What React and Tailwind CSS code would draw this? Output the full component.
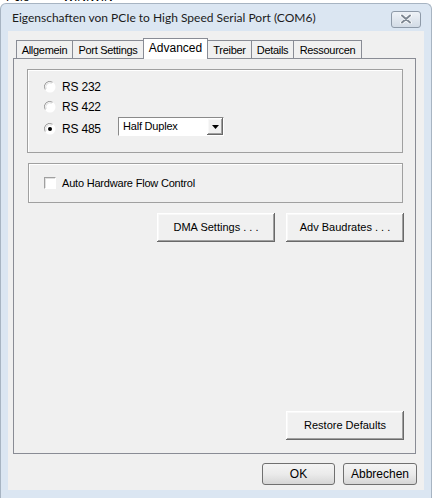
import React from "react";

const btn3d =
  "shadow-[inset_-1px_-1px_0_#696969,inset_1px_1px_0_#ffffff,inset_-2px_-2px_0_#a0a0a0,inset_2px_2px_0_#f8f8f8]";

function Radio({ checked }) {
  return (
    <div className="w-[12px] h-[12px] shrink-0">
      <svg width="12" height="12" viewBox="0 0 12 12">
        <circle cx="6" cy="6" r="5.5" fill="#ffffff" />
        <path d="M1.2 8.5 A5.3 5.3 0 0 1 8.5 1.2" stroke="#9a9a9a" strokeWidth="1" fill="none" />
        <path d="M2.2 7.8 A4.2 4.2 0 0 1 7.8 2.2" stroke="#dedede" strokeWidth="1" fill="none" />
        {checked && <circle cx="6" cy="6" r="2" fill="#000000" />}
      </svg>
    </div>
  );
}

function Tab({ label, w, selected }) {
  if (selected) {
    return (
      <div
        className={`${w} h-[21px] -ml-[1px] -mb-[1px] relative z-10 bg-white border-t border-l border-r border-[#898c95] flex items-start justify-center pt-[3px] text-[12px] leading-[13px] text-black`}
      >
        {label}
      </div>
    );
  }
  return (
    <div
      className={`${w} h-[18px] -ml-[1px] first:ml-0 bg-[#f0f0f0] border-t border-l border-r border-[#898c95] flex items-center justify-center pt-[1px] text-[11px] leading-[12px] tracking-[-0.3px] text-black`}
    >
      {label}
    </div>
  );
}

export default function App() {
  return (
    <div
      className="w-[432px] h-[498px] bg-white overflow-hidden flex flex-col"
      style={{ fontFamily: '"Liberation Sans", Arial, sans-serif' }}
    >
      <div className="h-[3px] overflow-hidden">
        <div className="-mt-[9px] pl-[6px] text-[12px] leading-[12px] text-black whitespace-nowrap">
          Pcie&nbsp;&nbsp;&nbsp;&nbsp;&nbsp;&nbsp;&nbsp;&nbsp;&nbsp;&nbsp;WINIWIN
        </div>
      </div>
      <div className="flex-1 flex flex-col rounded-t-[6px] border border-b-0 border-[#a7b4c2] bg-[#dbe6f2]">
        {/* title bar */}
        <div className="h-[27px] flex items-center justify-between pl-[11px] pr-[10px]">
          <span
            className="text-[12px] text-[#1c1c1c] whitespace-nowrap"
            style={{ fontFamily: 'Lato, "Liberation Sans", sans-serif' }}
          >
            Eigenschaften von PCIe to High Speed Serial Port (COM6)
          </span>
          <div className="w-[30px] h-[17px] mt-[3px] rounded-[3px] border border-[#8e9aa8] bg-gradient-to-b from-[#eef2f7] to-[#d3dce6] flex items-center justify-center">
            <svg width="12" height="10" viewBox="0 0 12 10">
              <path d="M2 1.5 L10 8.5 M10 1.5 L2 8.5" stroke="#ffffff" strokeWidth="3.6" strokeLinecap="round" />
              <path d="M2 1.5 L10 8.5 M10 1.5 L2 8.5" stroke="#7e8893" strokeWidth="2" strokeLinecap="round" />
            </svg>
          </div>
        </div>
        {/* client area */}
        <div className="flex-1 mx-[7px] mb-[8px] bg-[#f0f0f0] flex flex-col pt-[7px]">
          <div className="ml-[5px] w-[403px] flex flex-col">
            {/* tabs */}
            <div className="h-[20px] flex items-end pl-[3px]">
              <Tab label="Allgemein" w="w-[57px]" />
              <Tab label="Port Settings" w="w-[72px]" />
              <Tab label="Advanced" w="w-[65px]" selected />
              <Tab label="Treiber" w="w-[45px]" />
              <Tab label="Details" w="w-[43px]" />
              <Tab label="Ressourcen" w="w-[69px]" />
            </div>
            {/* page */}
            <div className="h-[396px] border border-[#898c95] bg-[#f0f0f0] flex flex-col text-[11px] text-black">
              {/* group 1 */}
              <div className="mt-[10px] ml-[13px] w-[376px] h-[84px] border border-[#a0a0a0] shadow-[inset_1px_1px_0_#ffffff] flex flex-col pl-[16px] pt-[7px]">
                <div className="h-[20px] flex items-center">
                  <Radio />
                  <span className="ml-[6px] text-[12px] tracking-[-0.2px]">RS 232</span>
                </div>
                <div className="h-[20px] flex items-center">
                  <Radio />
                  <span className="ml-[6px] text-[12px] tracking-[-0.2px]">RS 422</span>
                </div>
                <div className="h-[22px] mt-[1px] flex items-center">
                  <Radio checked />
                  <span className="ml-[6px] w-[56px] text-[12px] tracking-[-0.2px]">RS 485</span>
                  <div className="self-start -mt-[1px] w-[106px] h-[19px] flex border-t border-l border-[#8a8a8a] border-b border-r border-b-[#ffffff] border-r-[#ffffff] shadow-[inset_1px_1px_0_#404040]">
                    <div className="flex-1 bg-white flex items-center pl-[4px] tracking-[-0.2px]">Half Duplex</div>
                    <div className={`w-[16px] bg-[#f0f0f0] flex items-center justify-center ${btn3d}`}>
                      <svg width="7" height="4" viewBox="0 0 7 4">
                        <path d="M0 0 H7 L3.5 4 Z" fill="#000000" />
                      </svg>
                    </div>
                  </div>
                </div>
              </div>
              {/* group 2 */}
              <div className="mt-[10px] ml-[14px] w-[375px] h-[40px] border border-[#a0a0a0] shadow-[inset_1px_1px_0_#ffffff] flex items-center pl-[15px]">
                <div className="w-[12px] h-[12px] bg-white border-t border-l border-[#a0a0a0] border-b border-r border-b-[#ffffff] border-r-[#ffffff] shadow-[inset_1px_1px_0_#e0e0e0]" />
                <span className="ml-[6px] tracking-[-0.2px]">Auto Hardware Flow Control</span>
              </div>
              {/* buttons row */}
              <div className="mt-[10px] flex pl-[143px] gap-[11px]">
                <div className={`w-[118px] h-[29px] bg-[#f0f0f0] flex items-center justify-center ${btn3d}`}>
                  DMA Settings . . .
                </div>
                <div className={`w-[118px] h-[29px] bg-[#f0f0f0] flex items-center justify-center ${btn3d}`}>
                  Adv Baudrates . . .
                </div>
              </div>
              <div className="flex-1" />
              <div className="flex pl-[272px] mb-[13px]">
                <div className={`w-[118px] h-[29px] bg-[#f0f0f0] flex items-center justify-center ${btn3d}`}>
                  Restore Defaults
                </div>
              </div>
            </div>
          </div>
          {/* dialog buttons */}
          <div className="mt-[9px] flex justify-end gap-[8px] pr-[7px]">
            <div className="w-[73px] h-[22px] rounded-[3px] border border-[#707070] bg-gradient-to-b from-[#f4f4f4] via-[#ebebeb] to-[#d6d6d6] flex items-center justify-center text-[12px] text-black">
              OK
            </div>
            <div className="w-[74px] h-[22px] rounded-[3px] border border-[#707070] bg-gradient-to-b from-[#f4f4f4] via-[#ebebeb] to-[#d6d6d6] flex items-center justify-center text-[12px] text-black">
              Abbrechen
            </div>
          </div>
        </div>
      </div>
    </div>
  );
}
